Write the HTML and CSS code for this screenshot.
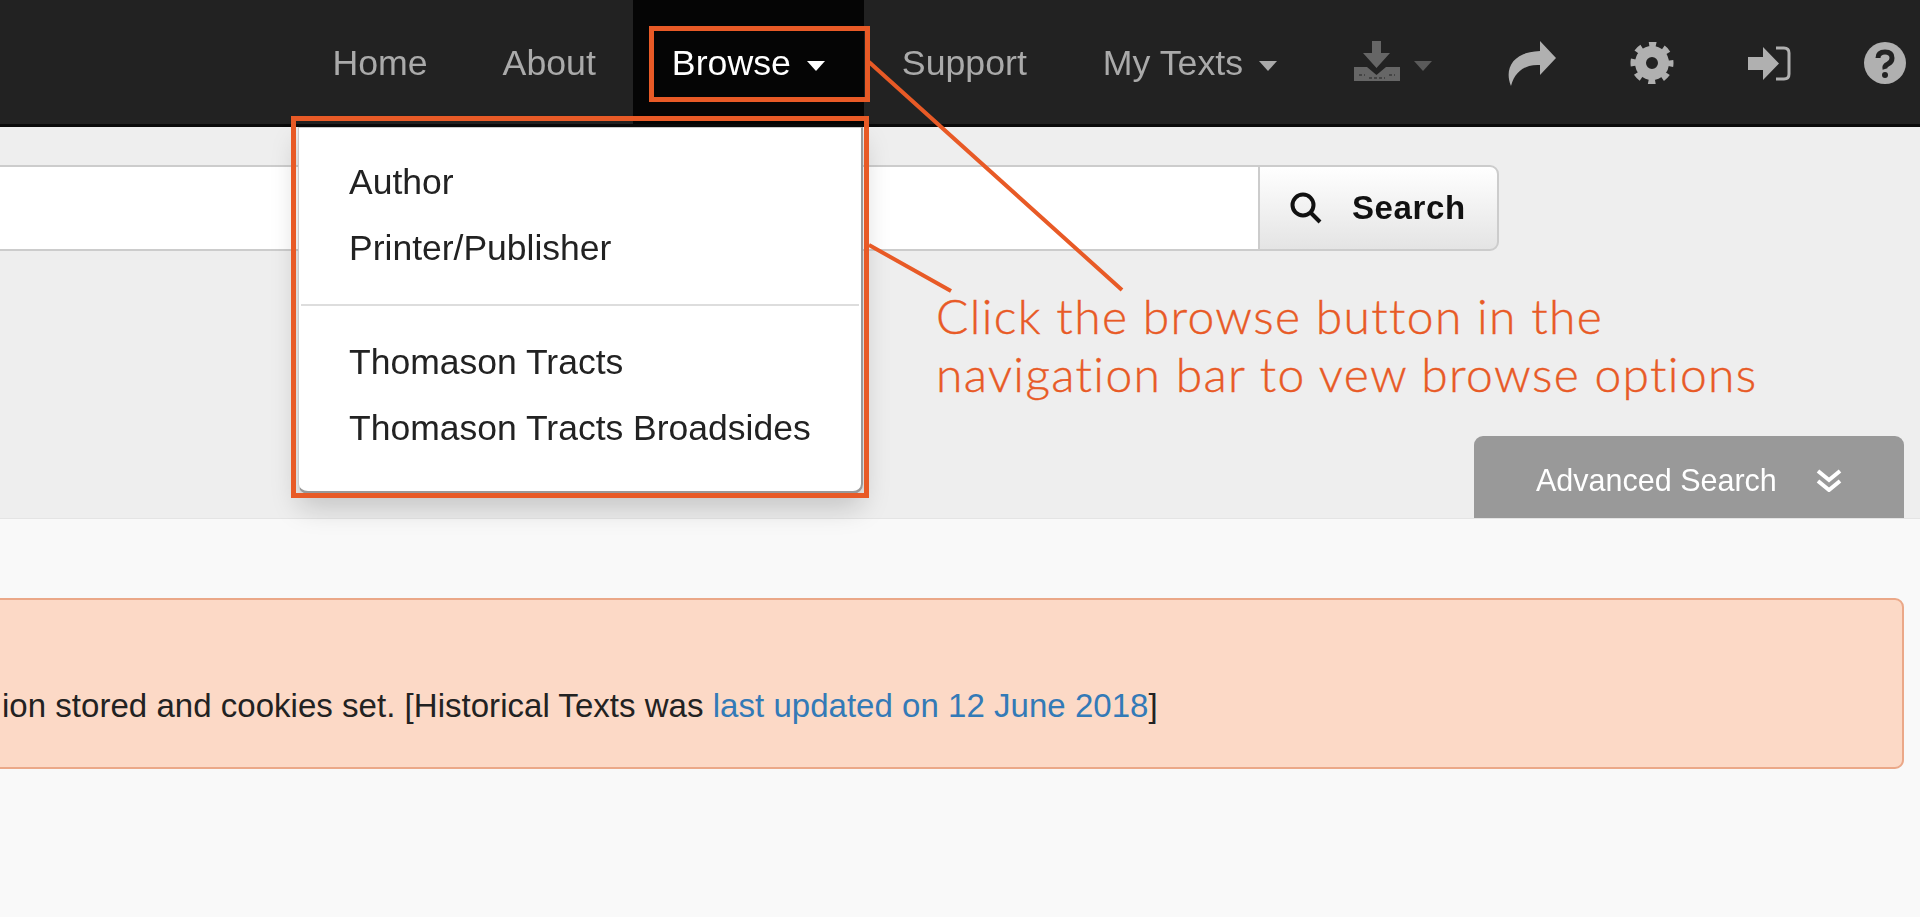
FILE: index.html
```html
<!DOCTYPE html>
<html lang="en">
<head>
<meta charset="utf-8">
<title>Historical Texts - Browse</title>
<link rel="stylesheet" href="styles.css">
</head>
<body>
<header class="navbar">
  <a class="nav-item tight" href="#">Home</a>
  <a class="nav-item tight" href="#">About</a>
  <a class="nav-item active" href="#">Browse<span class="caret"></span></a>
  <a class="nav-item" href="#">Support</a>
  <a class="nav-item" href="#">My Texts<span class="caret"></span></a>
  <a class="nav-item icon-item dim" href="#" aria-label="Downloads">
    <svg class="ico-download" viewBox="0 0 46 40"><path d="M18 0h9v12h9L22.500 27 9 12h9z"/><path d="M0 26h13l9.500 8 9.500-8h14v14H0z"/><path class="tray-dots" d="M5 34h6M15 37h16M35 34h6"/></svg><span class="caret"></span>
  </a>
  <a class="nav-item icon-item" href="#" aria-label="Share">
    <svg class="ico-share" viewBox="0 0 50 45"><path d="M34 0l16 17-16 17V24C20 23 9 30 5 45-2 28 6 11 34 10z"/></svg>
  </a>
  <a class="nav-item icon-item" href="#" aria-label="Settings">
    <svg class="ico-gear" viewBox="0 0 44 42"><circle class="gear-ring" cx="22" cy="21" r="11.500"/><circle class="gear-teeth" cx="22" cy="21" r="18.500"/></svg>
  </a>
  <a class="nav-item icon-item" href="#" aria-label="Log in">
    <svg class="ico-login" viewBox="0 0 43 35"><path d="M0 11h15V1l16 16.500L15 34V24H0z"/><path class="login-bracket" d="M28 2h8q5 0 5 5v21q0 5-5 5h-8"/></svg>
  </a>
  <a class="nav-item icon-item last" href="#" aria-label="Help">
    <svg class="ico-help" viewBox="0 0 42 42"><circle cx="21" cy="21" r="21"/><path class="help-mark" d="M14 16q0-6 7-6t7 6q0 4-4 6t-3 5"/><circle class="help-dot" cx="21" cy="33" r="3"/></svg>
  </a>
</header>

<section class="search-band">
  <form class="search-row">
    <input class="search-input" type="text" aria-label="Search">
    <button class="search-btn" type="button">
      <svg class="ico-search" viewBox="0 0 32 32"><circle cx="13" cy="13" r="10.500"/><path d="M20.500 20.500L30 30"/></svg>
      <span>Search</span>
    </button>
  </form>
  <a class="adv-tab" href="#"><span class="adv-label">Advanced Search</span>
    <svg class="ico-chevrons" viewBox="0 0 26 23"><path d="M2 2l11 9 11-9M2 12l11 9 11-9"/></svg>
  </a>
</section>

<main class="content">
  <div class="alert">ion stored and cookies set. [Historical Texts was <a href="#">last updated on 12 June 2018</a>]</div>
</main>

<ul class="dropdown">
  <li><a href="#">Author</a></li>
  <li><a href="#">Printer/Publisher</a></li>
  <li class="divider"></li>
  <li><a href="#">Thomason Tracts</a></li>
  <li><a href="#">Thomason Tracts Broadsides</a></li>
</ul>

<div class="mark mark-browse"></div>
<div class="mark mark-menu"></div>
<svg class="leaders" viewBox="0 0 1920 917"><path d="M869 62L1122 290M869 245L951 291"/></svg>
<p class="annotation">Click the browse button in the<br>navigation bar to vew browse options</p>
</body>
</html>
```
FILE: styles.css
```css
* { box-sizing: border-box; }
html, body { margin: 0; padding: 0; }
body {
  position: relative;
  width: 1920px;
  height: 917px;
  overflow: hidden;
  background: #f9f9f9;
  font-family: "Liberation Sans", Arial, sans-serif;
  color: #222;
}
a { text-decoration: none; color: inherit; }

/* navbar */
.navbar {
  display: flex;
  justify-content: flex-end;
  align-items: stretch;
  height: 127px;
  background: #222;
  border-bottom: 3px solid #0a0a0a;
}
.nav-item {
  display: flex;
  align-items: center;
  padding: 2px 38px 0;
  font-size: 35.700px;
  color: #aaa;
  white-space: nowrap;
  filter: blur(.4px);
}
.nav-item.tight { padding-right: 37px; }
.nav-item.active { background: #050505; color: #fff; padding: 2px 39px 0; }
.icon-item { padding: 2px 37px 0; }
.last { padding: 2px 14px 0 36px; }
.caret {
  width: 0;
  height: 0;
  margin-left: 16px;
  margin-top: 5px;
  border-left: 9px solid transparent;
  border-right: 9px solid transparent;
  border-top: 10px solid currentColor;
}
.icon-item svg { display: block; fill: #b0b0b0; }
.dim { color: #5a5a5a; padding-left: 39px; }
.dim .caret { margin-left: 14px; }
.ico-download { width: 46px; height: 40px; fill: #666 !important; margin-top: -4px; }
.tray-dots { fill: none; stroke: #444; stroke-width: 2; stroke-dasharray: 3 2; }
.ico-share { width: 50px; height: 45px; }
.ico-gear { width: 44px; height: 42px; }
.gear-ring { fill: none; stroke: #b0b0b0; stroke-width: 11; }
.gear-teeth { fill: none; stroke: #b0b0b0; stroke-width: 6; stroke-dasharray: 7 7.530; stroke-dashoffset: 3.500; }
.ico-login { width: 43px; height: 35px; }
.login-bracket { fill: none; stroke: #b0b0b0; stroke-width: 3; }
.ico-help { width: 42px; height: 42px; }
.help-mark { fill: none; stroke: #222; stroke-width: 5; }
.help-dot { fill: #222; }

/* search band */
.search-band {
  display: flex;
  flex-direction: column;
  height: 392px;
  padding-top: 38px;
  background: #eee;
  border-bottom: 1px solid #e4e4e4;
}
.search-row {
  display: flex;
  width: 1519px;
  height: 86px;
  margin-left: -20px;
}
.search-input {
  flex: 1;
  border: 2px solid #ccc;
  border-right: 0;
  background: #fff;
}
.search-btn {
  display: flex;
  align-items: center;
  gap: 30px;
  width: 241px;
  padding: 0 0 0 30px;
  border: 2px solid #ccc;
  border-radius: 0 9px 9px 0;
  background: linear-gradient(#fff, #e4e4e4);
  font: bold 33px "Liberation Sans", Arial, sans-serif;
  letter-spacing: 0.6px;
  color: #111;
}
.search-btn span { filter: blur(.4px); }
.ico-search { width: 32px; height: 32px; fill: none; stroke: #111; stroke-width: 4; flex: none; }
.adv-tab {
  display: flex;
  align-items: center;
  align-self: flex-end;
  gap: 39px;
  width: 430px;
  height: 82px;
  margin-top: auto;
  margin-right: 16px;
  padding: 6px 0 0 62px;
  background: #999;
  border-radius: 9px 9px 0 0;
  font-size: 30.500px;
  color: #fff;
}
.adv-label { filter: blur(.4px); }
.ico-chevrons { width: 26px; height: 23px; fill: none; stroke: #fff; stroke-width: 4; }

/* alert */
.content { padding-top: 79px; }
.alert {
  width: 1924px;
  height: 171px;
  margin-left: -20px;
  padding: 84px 0 0 20px;
  background: #fcd9c6;
  border: 2px solid #eba888;
  border-radius: 9px;
  font-size: 33px;
  line-height: 44px;
  letter-spacing: .03px;
  white-space: nowrap;
  color: #222;
}
.alert a { color: #337ab7; }

/* dropdown */
.dropdown {
  position: absolute;
  left: 298px;
  top: 127px;
  width: 565px;
  height: 367px;
  margin: 0;
  padding: 22px 0 0;
  list-style: none;
  background: #fff;
  border: 1px solid #ccc;
  border-right: 2px solid #999;
  border-bottom: 3px solid #999;
  border-radius: 0 0 10px 10px;
  box-shadow: 0 14px 28px rgba(0, 0, 0, .175);
  font-size: 35.500px;
}
.dropdown li a {
  display: block;
  height: 65.500px;
  padding-left: 50px;
  line-height: 65.500px;
  color: #222;
  filter: blur(.4px);
}
.dropdown .divider { height: 2px; margin: 23px 2px 24px; background: #ddd; }

/* call-out overlays */
.mark { position: absolute; border: 5px solid #e85a26; }
.mark-browse { left: 649px; top: 26px; width: 221px; height: 76px; }
.mark-menu { left: 291px; top: 116px; width: 578px; height: 382px; }
.leaders { position: absolute; left: 0; top: 0; width: 1920px; height: 917px; fill: none; stroke: #e85a26; stroke-width: 4; }
.annotation {
  position: absolute;
  left: 936px;
  top: 287px;
  margin: 0;
  font-family: Lato, sans-serif;
  font-weight: 300;
  font-size: 48px;
  line-height: 58px;
  letter-spacing: 1.350px;
  -webkit-text-stroke: .4px #e85a26;
  white-space: nowrap;
  color: #e85a26;
}
```
